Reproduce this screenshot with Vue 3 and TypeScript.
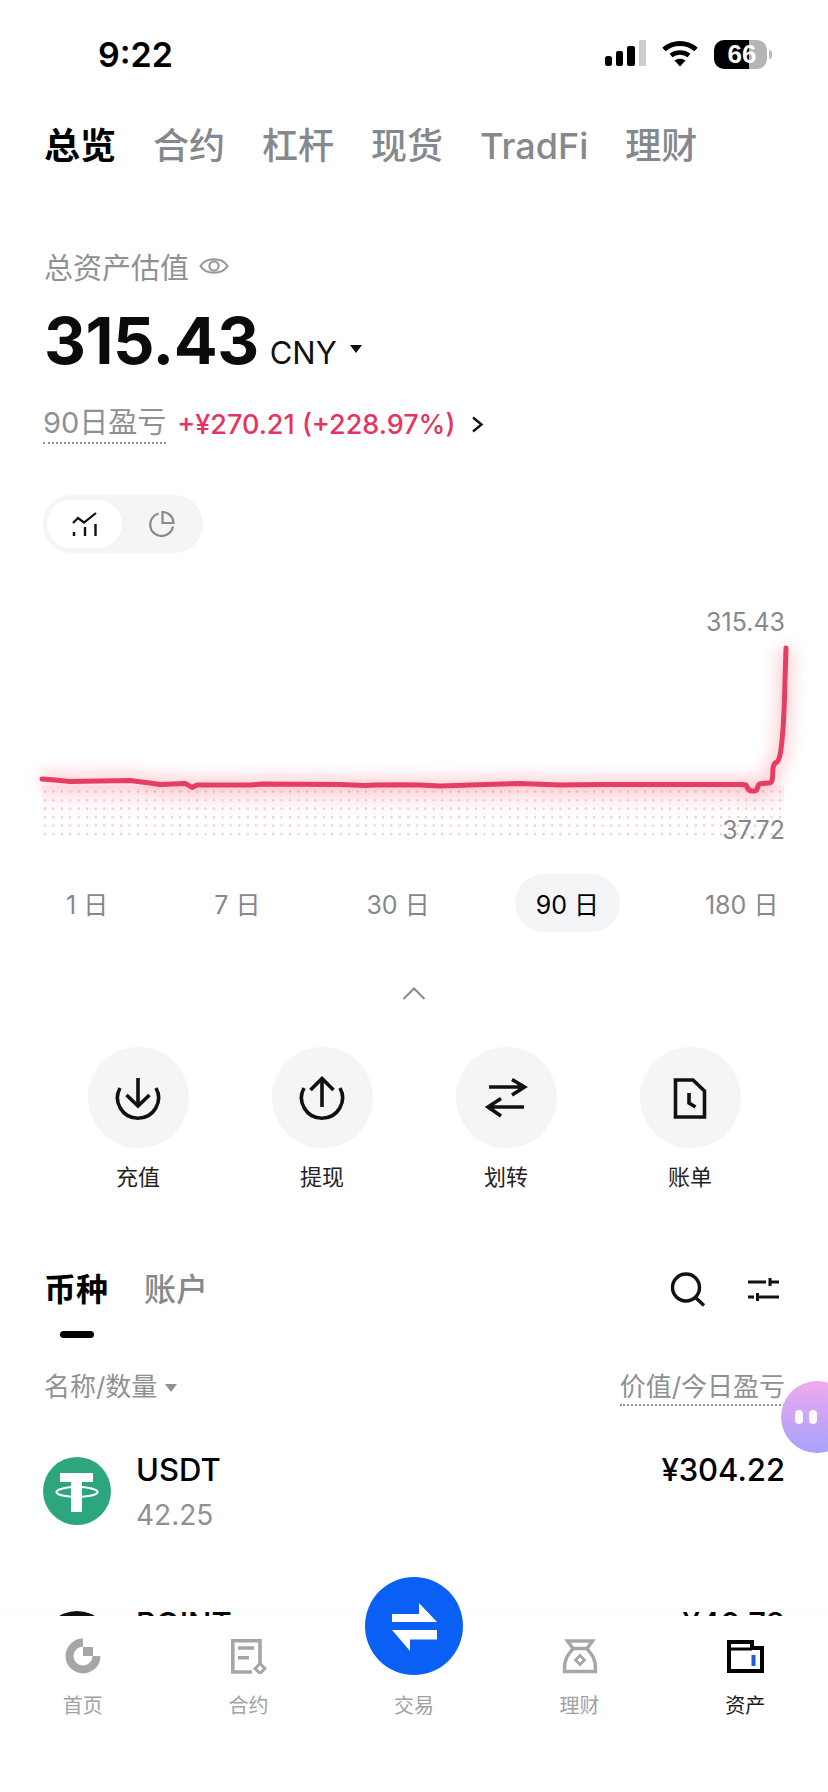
<script setup lang="ts">
const tabs = ['总览', '合约', '杠杆', '现货', 'TradFi', '理财']
const ranges = ['1 日', '7 日', '30 日', '90 日', '180 日']
const linePath = 'M42 779 L55 780 L70 781.5 L100 781 L130 780.5 L150 783 L160 784.5 L185 783.5 L188 785 L192 787.5 L197 785 L230 785 L250 785 L262 784 L340 784.5 L365 785.5 L375 785 L400 784.7 L420 785 L440 786 L470 785 L520 783.5 L560 785 L600 784.5 L700 784.5 L742 784.5 L746 785 Q748 790 751 791 L755 791 Q757 791 758 786 Q759 783.5 762 783.5 L769 783 Q772 783 772.5 778 L773 768 Q773.5 763 777 762 Q780 760 781.5 745 Q784 725 785 680 L786 648'
</script>

<template>
  <div class="page">
    <div class="scroll">
      <header class="status">
        <span class="time">9:22</span>
        <div class="status-icons">
          <svg class="signal" width="42" height="28" viewBox="0 0 42 28">
            <rect x="0" y="16" width="7" height="10" rx="2.5" fill="#000" />
            <rect x="11" y="11" width="7" height="15" rx="2" fill="#000" />
            <rect x="22" y="6" width="8" height="20" rx="2" fill="#000" />
            <rect x="34" y="0" width="7" height="26" rx="1" fill="#ccc" />
          </svg>
          <svg class="wifi" width="36" height="28" viewBox="0 0 36 28">
            <path d="M2 9.5 C11 1.5 25 1.5 34 9.5" fill="none" stroke="#000" stroke-width="5" />
            <path d="M9 15.5 C14 11.5 22 11.5 27 15.5" fill="none" stroke="#000" stroke-width="4.5" />
            <path d="M12.5 20.5 L18 26.5 L23.5 20.5 C20 18 16 18 12.5 20.5 Z" fill="#000" />
          </svg>
          <div class="battery"><span>66</span></div>
          <i class="battery-cap"></i>
        </div>
      </header>

      <nav class="tabs">
        <span v-for="(t, i) in tabs" :key="t" class="tab" :class="{ active: i === 0 }">{{ t }}</span>
      </nav>

      <section class="asset-label">
        <span>总资产估值</span>
        <svg width="30" height="22" viewBox="0 0 30 22">
          <path d="M1.5 11 C7 2 23 2 28.5 11 C23 20 7 20 1.5 11 Z" fill="none" stroke="#999" stroke-width="2.2" />
          <circle cx="15" cy="11" r="4.6" fill="none" stroke="#999" stroke-width="2.2" />
        </svg>
      </section>

      <section class="amount">
        <span class="value">315.43</span>
        <span class="unit">CNY</span>
        <i class="caret"></i>
      </section>

      <section class="pnl">
        <span class="pnl-label">90日盈亏</span>
        <span class="pnl-value">+¥270.21 (+228.97%)</span>
        <svg width="13" height="17" viewBox="0 0 13 17">
          <path d="M2 1.5 L10.5 8.5 L2 15.5" fill="none" stroke="#111" stroke-width="2.4" />
        </svg>
      </section>

      <div class="toggle">
        <div class="toggle-item on">
          <svg width="28" height="26" viewBox="0 0 28 26">
            <path d="M2 12 L7 7 L13 11.5 L25 2" fill="none" stroke="#111" stroke-width="2.2" />
            <path d="M3 21 V25 M14 16 V25 M24.5 13 V25" fill="none" stroke="#111" stroke-width="2.4" />
          </svg>
        </div>
        <div class="toggle-item">
          <svg width="30" height="30" viewBox="0 0 30 30">
            <path d="M12.5 4.5 A11.5 11.5 0 1 0 27 17.5" fill="none" stroke="#888" stroke-width="2.2" />
            <path d="M16.5 3 A11 11 0 0 1 27.5 14 H16.5 Z" fill="none" stroke="#888" stroke-width="2.2" />
          </svg>
        </div>
      </div>

      <section class="chart">
        <svg class="chart-svg" width="828" height="260" viewBox="0 600 828 260">
          <defs>
            <pattern id="dots" patternUnits="userSpaceOnUse" x="43" y="787.5" width="8.45" height="8.5">
              <circle cx="2" cy="4.2" r="1.1" fill="#f0b6c2" />
            </pattern>
            <linearGradient id="fade" x1="0" y1="0" x2="0" y2="1">
              <stop offset="0" stop-color="#f9495f" stop-opacity=".1" />
              <stop offset="1" stop-color="#f9495f" stop-opacity="0" />
            </linearGradient>
          </defs>
          <rect x="42" y="786" width="742" height="34" fill="url(#fade)" />
          <rect x="43" y="787.5" width="742" height="51" fill="url(#dots)" />
          <path class="glow" :d="linePath" />
          <path class="line" :d="linePath" />
        </svg>
        <span class="chart-max">315.43</span>
        <span class="chart-min">37.72</span>
      </section>

      <div class="ranges">
        <span v-for="r in ranges" :key="r" class="range" :class="{ active: r === '90 日' }">{{ r }}</span>
      </div>

      <div class="collapse">
        <svg width="24" height="13" viewBox="0 0 24 13">
          <path d="M1.5 12 L12 1.5 L22.5 12" fill="none" stroke="#888" stroke-width="2" />
        </svg>
      </div>

      <div class="actions">
        <div class="action">
          <div class="action-circle">
            <svg width="48" height="48" viewBox="0 0 48 48" class="ic">
              <path d="M6 14 A20.5 20.5 0 1 0 42 14" />
              <path d="M24 4 V32 M12.5 21 L24 32 L35.5 21" />
            </svg>
          </div>
          <span>充值</span>
        </div>
        <div class="action">
          <div class="action-circle">
            <svg width="48" height="48" viewBox="0 0 48 48" class="ic">
              <path d="M6 14 A20.5 20.5 0 1 0 42 14" />
              <path d="M24 33 V5 M12.5 16 L24 4.5 L35.5 16" />
            </svg>
          </div>
          <span>提现</span>
        </div>
        <div class="action">
          <div class="action-circle">
            <svg width="48" height="48" viewBox="0 0 48 48" class="ic">
              <path d="M7 13 H42 M30 5.5 L42.5 13 L30 21" />
              <path d="M42 33 H6 M19 24.5 L6 33 L19 42" />
            </svg>
          </div>
          <span>划转</span>
        </div>
        <div class="action">
          <div class="action-circle">
            <svg width="48" height="48" viewBox="0 0 48 48" class="ic">
              <path d="M9.5 6 H27 L38.5 17 V43 H9.5 Z" stroke-width="4" />
              <path d="M23 19 V29 L29.5 33" />
            </svg>
          </div>
          <span>账单</span>
        </div>
      </div>

      <div class="list-head">
        <div class="list-tabs">
          <span class="lt active">币种</span>
          <span class="lt">账户</span>
        </div>
        <div class="list-tools">
          <svg width="40" height="40" viewBox="0 0 40 40">
            <circle cx="18" cy="17.5" r="13.5" fill="none" stroke="#111" stroke-width="3.4" />
            <path d="M27.5 27.5 L36 35.5" fill="none" stroke="#111" stroke-width="3.4" />
          </svg>
          <svg width="36" height="30" viewBox="0 0 36 30">
            <path d="M2 7 H20 M24 3 V11 M24 7 H33 M2 22 H8 M11.5 18 V26 M11.5 22 H33" fill="none" stroke="#111" stroke-width="3" />
          </svg>
        </div>
      </div>
      <div class="list-indicator"></div>

      <div class="columns">
        <div class="col-left">
          <span>名称/数量</span>
          <i class="caret small"></i>
        </div>
        <span class="col-right">价值/今日盈亏</span>
      </div>

      <div class="coin">
        <svg class="coin-icon" width="68" height="68" viewBox="0 0 68 68">
          <circle cx="34" cy="34" r="34" fill="#2da57f" />
          <rect x="17" y="16" width="33" height="9" fill="#fff" />
          <rect x="28" y="25" width="11" height="30" fill="#fff" />
          <ellipse cx="34" cy="35" rx="20.5" ry="5" fill="none" stroke="#fff" stroke-width="2.2" />
        </svg>
        <div class="coin-main">
          <span class="coin-name">USDT</span>
          <span class="coin-qty">42.25</span>
        </div>
        <span class="coin-value">¥304.22</span>
      </div>

      <div class="coin">
        <svg class="coin-icon" width="68" height="68" viewBox="0 0 68 68">
          <circle cx="34" cy="34" r="34" fill="#111" />
        </svg>
        <div class="coin-main">
          <span class="coin-name">POINT</span>
        </div>
        <span class="coin-value">¥40.78</span>
      </div>
    </div>

    <footer class="bottom">
      <div class="nav-item">
        <svg width="36" height="36" viewBox="0 0 36 36">
          <path d="M18 4.5 A13.5 13.5 0 1 0 31.5 18" fill="none" stroke="#a4a6a9" stroke-width="8" />
          <rect x="18" y="9" width="10" height="9" fill="#a4a6a9" />
        </svg>
        <span>首页</span>
      </div>
      <div class="nav-item">
        <svg width="37" height="36" viewBox="0 0 37 36">
          <path d="M22 34 H2.8 V2.8 H30 V25" fill="none" stroke="#a4a6a9" stroke-width="3.6" />
          <path d="M8 10 H24 M8 19.7 H19" fill="none" stroke="#a4a6a9" stroke-width="3.4" />
          <path d="M30 26 L35 31 L30 36 L25 31 Z" fill="none" stroke="#a4a6a9" stroke-width="3" transform="translate(0 -0.5)" />
        </svg>
        <span>合约</span>
      </div>
      <div class="nav-item">
        <div class="nav-spacer"></div>
        <span>交易</span>
      </div>
      <div class="nav-item">
        <svg width="36" height="36" viewBox="0 0 36 36">
          <path d="M5.5 3 H30.5 L25 10.5 H11 Z" fill="none" stroke="#a4a6a9" stroke-width="3.4" />
          <path d="M11 10.5 C8 15 2.5 19 2.5 30 V33.5 H33.5 V30 C33.5 19 28 15 25 10.5" fill="none" stroke="#a4a6a9" stroke-width="3.4" />
          <path d="M18 17.5 L22.5 22 L18 26.5 L13.5 22 Z" fill="none" stroke="#a4a6a9" stroke-width="2.8" />
        </svg>
        <span>理财</span>
      </div>
      <div class="nav-item on">
        <svg width="38" height="36" viewBox="0 0 38 36">
          <path d="M3 33 V4 H26 V10 H36 V33 Z" fill="none" stroke="#000" stroke-width="4" />
          <path d="M3 11 H26" fill="none" stroke="#000" stroke-width="3" />
          <rect x="25.5" y="17" width="4" height="11" fill="#1c5fe0" />
        </svg>
        <span>资产</span>
      </div>
      <div class="trade-btn">
        <svg width="98" height="98" viewBox="0 0 98 98">
          <path d="M27 37 H54 V26 L72 45 H27 Z M72 53 H27 L45 74 V62.5 H72 Z" fill="#fff" />
        </svg>
      </div>
    </footer>

    <div class="assistant">
      <i></i><i></i>
    </div>
  </div>
</template>

<style scoped>
.page {
  position: relative;
  width: 828px;
  height: 1792px;
  display: flex;
  flex-direction: column;
  overflow: hidden;
  background: #fff;
  color: #111;
  font-family: Inter, "Noto Sans CJK SC", sans-serif;
}
.scroll {
  height: 1616px;
  overflow: hidden;
  flex: none;
}
.status {
  height: 92px;
  padding: 38px 56px 0 98px;
  box-sizing: border-box;
  display: flex;
  justify-content: space-between;
  align-items: flex-start;
}
.time {
  font-size: 34px;
  line-height: 34px;
  font-weight: 600;
  color: #000;
}
.status-icons {
  display: flex;
  align-items: flex-start;
  margin-top: 2px;
}
.signal { margin-right: 15px; }
.wifi { margin-right: 16px; }
.battery {
  width: 53px;
  height: 29px;
  border-radius: 10px;
  background: linear-gradient(to right, #000 66%, #b5b5b5 66%);
  display: flex;
  align-items: center;
  justify-content: center;
  color: #fff;
  font-family: "Liberation Sans", sans-serif;
  font-weight: 700;
  font-size: 26px;
}
.battery span { margin-left: 3px; }
.battery-cap {
  display: block;
  width: 3px;
  height: 9px;
  margin: 10px 0 0 2px;
  background: #bbb;
  border-radius: 0 3px 3px 0;
}
.tabs {
  padding: 32px 0 0 44px;
  display: flex;
  gap: 37px;
  font-size: 36px;
  line-height: 44px;
  font-weight: 500;
  color: #85888c;
}
.tab.active {
  color: #000;
  font-weight: 700;
}
.asset-label {
  margin: 80px 0 0 44px;
  display: flex;
  align-items: center;
  gap: 10px;
  height: 36px;
  font-size: 29px;
  color: #8e9194;
}
.amount {
  margin: 21px 0 0 44px;
  height: 72px;
  display: flex;
  align-items: baseline;
  line-height: 72px;
}
.value {
  font-size: 65px;
  font-weight: 700;
  color: #0b0b0b;
  letter-spacing: -0.5px;
}
.unit {
  font-size: 31px;
  font-weight: 400;
  margin-left: 11px;
}
.caret {
  display: block;
  width: 0;
  height: 0;
  margin-left: 13px;
  align-self: center;
  border-left: 6px solid transparent;
  border-right: 6px solid transparent;
  border-top: 8px solid #111;
  position: relative;
  top: 8px;
}
.caret.small {
  border-top-color: #8e9194;
  margin-left: 8px;
  top: 1px;
}
.pnl {
  margin: 27px 0 0 43px;
  height: 40px;
  display: flex;
  align-items: center;
}
.pnl-label {
  font-size: 29px;
  line-height: 38px;
  color: #8e9194;
  border-bottom: 2px dotted #8e9194;
  height: 38px;
}
.pnl-value {
  margin-left: 11px;
  font-size: 27px;
  font-weight: 500;
  color: #e6335f;
}
.pnl svg { margin-left: 16px; }
.toggle {
  margin: 51px 0 0 43px;
  width: 160px;
  height: 58px;
  box-sizing: border-box;
  padding: 5px 4px;
  border-radius: 29px;
  background: #f3f5f6;
  display: flex;
}
.toggle-item {
  width: 75px;
  display: flex;
  align-items: center;
  justify-content: center;
  border-radius: 24px;
}
.toggle-item:last-child { margin-left: 1px; }
.toggle-item.on { background: #fff; }
.chart {
  position: relative;
  margin-top: 47px;
  height: 260px;
}
.chart-svg { display: block; }
.line {
  fill: none;
  stroke: #e63e60;
  stroke-width: 5;
  stroke-linejoin: round;
  stroke-linecap: round;
}
.glow {
  fill: none;
  stroke: #f9495f;
  stroke-width: 14;
  opacity: .28;
  filter: blur(8px);
}
.chart-max, .chart-min {
  position: absolute;
  right: 43px;
  font-size: 25px;
  line-height: 30px;
  color: #85888c;
}
.chart-max { top: 7px; }
.chart-min { top: 215px; }
.ranges {
  margin: 14px 0 0 45px;
  display: flex;
  gap: 64px;
}
.range {
  height: 58px;
  padding: 0 21px;
  border-radius: 29px;
  display: flex;
  align-items: center;
  font-size: 25px;
  color: #85888c;
  white-space: nowrap;
}
.range.active {
  background: #f3f5f6;
  color: #000;
}
.collapse {
  margin-top: 55px;
  height: 13px;
  display: flex;
  justify-content: center;
  padding-left: 0;
}
.collapse svg { display: block; margin-right: 0; }
.actions {
  margin: 47px 0 0 46px;
  display: grid;
  grid-template-columns: repeat(4, 184px);
}
.action {
  display: flex;
  flex-direction: column;
  align-items: center;
  gap: 14px;
  font-size: 22px;
  line-height: 30px;
  color: #222;
}
.action-circle {
  width: 101px;
  height: 101px;
  border-radius: 50%;
  background: #f3f5f6;
  display: flex;
  align-items: center;
  justify-content: center;
}
.ic path {
  fill: none;
  stroke: #111;
  stroke-width: 3.6;
}
.list-head {
  margin: 76px 44px 0 44px;
  height: 44px;
  display: flex;
  justify-content: space-between;
  align-items: center;
}
.list-tabs {
  display: flex;
  gap: 36px;
  font-size: 32px;
  line-height: 44px;
  color: #85888c;
  font-weight: 500;
}
.lt.active {
  color: #000;
  font-weight: 700;
}
.list-tools {
  display: flex;
  align-items: center;
  gap: 38px;
  margin-right: 2px;
}
.list-indicator {
  width: 34px;
  height: 7px;
  margin: 19px 0 0 60px;
  background: #000;
  border-radius: 4px;
}
.columns {
  margin: 32px 43px 0 44px;
  height: 36px;
  display: flex;
  justify-content: space-between;
  align-items: flex-start;
  font-size: 26px;
  line-height: 34px;
  color: #8e9194;
}
.col-left {
  display: flex;
  align-items: center;
}
.col-right {
  border-bottom: 2px dotted #8e9194;
}
.coin {
  margin: 46px 43px 0 43px;
  height: 108px;
  display: flex;
  align-items: flex-start;
}
.coin + .coin { margin-top: 46px; }
.coin-icon {
  margin-top: 5px;
  flex: none;
}
.coin-main {
  margin-left: 25px;
  flex: 1;
  display: flex;
  flex-direction: column;
  gap: 9px;
}
.coin-name {
  font-size: 31px;
  line-height: 36px;
  font-weight: 500;
  color: #000;
}
.coin-qty {
  font-size: 28px;
  line-height: 36px;
  color: #8e9194;
}
.coin-value {
  font-size: 31px;
  line-height: 36px;
  font-weight: 500;
  color: #000;
}
.bottom {
  position: relative;
  flex: none;
  height: 176px;
  box-sizing: border-box;
  padding-top: 22px;
  display: grid;
  grid-template-columns: repeat(5, 1fr);
  background: #fff;
  box-shadow: 0 -8px 6px rgba(0, 0, 0, .012);
}
.nav-item {
  display: flex;
  flex-direction: column;
  align-items: center;
  gap: 19px;
  font-size: 20px;
  line-height: 26px;
  color: #a0a2a5;
}
.nav-item svg, .nav-spacer {
  display: block;
  height: 36px;
}
.nav-item.on { color: #1a1a1a; }
.trade-btn {
  position: absolute;
  left: 365px;
  top: -39px;
  width: 98px;
  height: 98px;
  border-radius: 50%;
  background: #0a5ff5;
}
.trade-btn svg { display: block; }
.assistant {
  position: absolute;
  left: 781px;
  top: 1381px;
  width: 72px;
  height: 72px;
  border-radius: 50%;
  background: linear-gradient(#efa9ee, #a6a2fa);
  display: flex;
  align-items: center;
  gap: 6px;
  padding-left: 14px;
  box-sizing: border-box;
}
.assistant i {
  display: block;
  width: 8px;
  height: 14px;
  border-radius: 4px;
  background: #fff;
  opacity: .92;
}
</style>

<style>
html, body {
  margin: 0;
  background: #fff;
}
</style>
